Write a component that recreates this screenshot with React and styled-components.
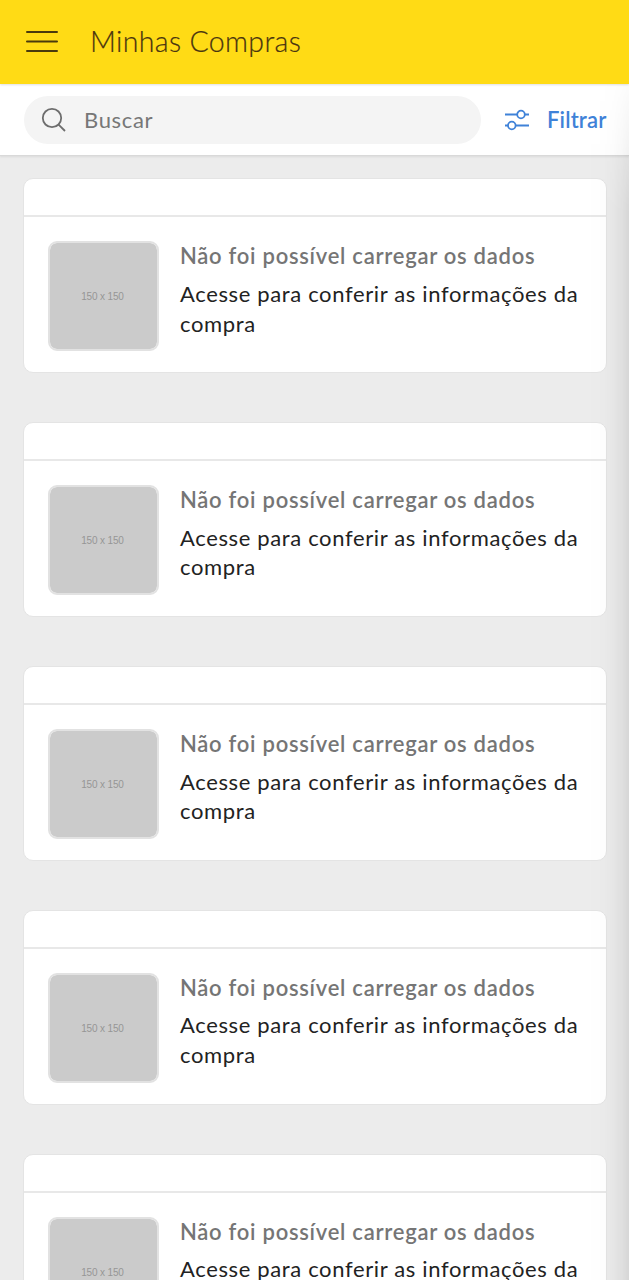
import React from "react";
import styled, { createGlobalStyle } from "styled-components";

const GlobalStyle = createGlobalStyle`
  *, *::before, *::after { box-sizing: border-box; }
  html, body { margin: 0; padding: 0; }
  body {
    background: #ececec;
    font-family: Lato, "Liberation Sans", sans-serif;
    overflow: hidden;
  }
`;

const Screen = styled.div`
  position: relative;
  display: flex;
  flex-direction: column;
  width: 100%;
  height: 1280px;
  overflow: hidden;
  background: #ececec;
`;

const EdgeShade = styled.div`
  position: absolute;
  top: 84px;
  right: 0;
  bottom: 0;
  width: 42px;
  pointer-events: none;
  background: linear-gradient(
    to right,
    rgba(0, 0, 0, 0) 0%,
    rgba(0, 0, 0, 0.008) 40%,
    rgba(0, 0, 0, 0.025) 62%,
    rgba(0, 0, 0, 0.05) 82%,
    rgba(0, 0, 0, 0.09) 100%
  );
  mask-image: linear-gradient(to bottom, rgba(0, 0, 0, 0.15) 0, rgba(0, 0, 0, 0.5) 60px, #000 130px);
`;

const Header = styled.header`
  position: relative;
  display: flex;
  flex: none;
  align-items: center;
  gap: 32px;
  height: 84px;
  padding: 0 26px;
  background: #ffdb15;
  box-shadow: 0 1px 2px rgba(0, 0, 0, 0.12);
  z-index: 1;
`;

const Title = styled.h1`
  margin: 0 0 2px;
  color: #4a3510;
  font-size: 28.5px;
  font-weight: 300;
  line-height: 36px;
  letter-spacing: 0.35px;
  white-space: nowrap;
  -webkit-text-stroke: 0.2px currentColor;
`;

const SearchBar = styled.div`
  display: flex;
  flex: none;
  align-items: center;
  height: 72px;
  padding: 0 22px 0 24px;
  background: #fff;
  border-bottom: 1px solid #d9d9d9;
  box-shadow: 0 1px 2px rgba(0, 0, 0, 0.08);
`;

const SearchField = styled.div`
  display: flex;
  flex: none;
  align-items: center;
  gap: 18px;
  width: 457px;
  height: 48px;
  padding-left: 17px;
  border-radius: 24px;
  background: #f4f4f4;
`;

const Placeholder = styled.span`
  color: #777;
  font-size: 22px;
  line-height: 30px;
  letter-spacing: 0.65px;
`;

const FilterLink = styled.div`
  display: flex;
  align-items: center;
  gap: 17px;
  margin-left: 24px;
  color: #3f82d8;
`;

const FilterLabel = styled.span`
  font-size: 22px;
  font-weight: 600;
  line-height: 30px;
  letter-spacing: 0.15px;
  white-space: nowrap;
`;

const List = styled.main`
  display: flex;
  flex-direction: column;
  gap: 48.9px;
  padding: 22.4px 22px 0 23px;
`;

const Card = styled.article`
  flex: none;
  height: 195px;
  border: 1px solid #e4e4e4;
  border-radius: 10px;
  background: #fff;
`;

const CardHead = styled.div`
  height: 38px;
  border-bottom: 2px solid #e8e8e8;
`;

const CardBody = styled.div`
  display: flex;
  gap: 21px;
  padding: 24px 10px 0 24px;
`;

const Thumb = styled.div`
  display: flex;
  flex: none;
  align-items: center;
  justify-content: center;
  width: 111px;
  height: 110px;
  padding: 2px 2px 0 0;
  border: 2px solid #e2e2e2;
  border-radius: 9px;
  background: #cbcbcb;
  background-clip: padding-box;
  color: #969696;
  font-family: "Liberation Sans", sans-serif;
  font-size: 10px;
  line-height: 12px;
  letter-spacing: -0.15px;
`;

const Info = styled.div`
  display: flex;
  flex-direction: column;
  gap: 7.4px;
`;

const Status = styled.div`
  color: #757575;
  font-size: 22px;
  font-weight: 600;
  line-height: 30px;
  letter-spacing: 0.73px;
  white-space: nowrap;
`;

const Detail = styled.div`
  color: #222;
  font-size: 22px;
  line-height: 29.8px;
  letter-spacing: 0.64px;
  white-space: nowrap;
`;

const MenuIcon = () => (
  <svg width="32" height="24" viewBox="0 0 32 24" stroke="#4a3a0c" strokeWidth="2" strokeLinecap="round">
    <path d="M1 2H31M1 11.5H31M1 21H31" />
  </svg>
);

const SearchIcon = () => (
  <svg width="25" height="25" viewBox="0 0 25 25" fill="none" stroke="#6d6d6d" strokeWidth="1.8">
    <circle cx="11" cy="11" r="9.2" />
    <path d="M17.6 17.6L24 24" />
  </svg>
);

const FilterIcon = () => (
  <svg width="25" height="22" viewBox="0 0 25 22" fill="none" stroke="currentColor" strokeWidth="1.8">
    <path d="M0 5.5H12.2M19.8 5.5H24M0 16.5H3M10.6 16.5H24" />
    <circle cx="16" cy="5.5" r="3.8" />
    <circle cx="6.8" cy="16.5" r="3.8" />
  </svg>
);

const purchases = [1, 2, 3, 4, 5];

const PurchaseCard = () => (
  <Card>
    <CardHead />
    <CardBody>
      <Thumb>150 x 150</Thumb>
      <Info>
        <Status>Não foi possível carregar os dados</Status>
        <Detail>
          Acesse para conferir as informações da
          <br />
          compra
        </Detail>
      </Info>
    </CardBody>
  </Card>
);

export default function App() {
  return (
    <>
      <GlobalStyle />
      <Screen>
        <Header>
          <MenuIcon />
          <Title>Minhas Compras</Title>
        </Header>
        <SearchBar>
          <SearchField>
            <SearchIcon />
            <Placeholder>Buscar</Placeholder>
          </SearchField>
          <FilterLink>
            <FilterIcon />
            <FilterLabel>Filtrar</FilterLabel>
          </FilterLink>
        </SearchBar>
        <List>
          {purchases.map((id) => (
            <PurchaseCard key={id} />
          ))}
        </List>
        <EdgeShade />
      </Screen>
    </>
  );
}
